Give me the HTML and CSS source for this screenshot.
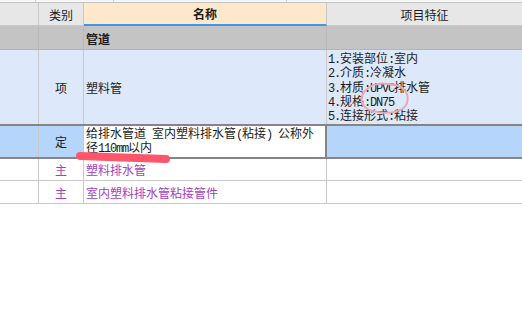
FILE: index.html
```html
<!DOCTYPE html>
<html lang="zh">
<head>
<meta charset="utf-8">
<link rel="stylesheet" href="styles.css">
</head>
<body>
<div class="sheet">
  <div class="top-strip"></div>
  <div class="row head">
    <div class="cell c1"></div>
    <div class="cell c2 center">类别</div>
    <div class="cell c3 center bold name-head">名称</div>
    <div class="cell c4 center">项目特征</div>
  </div>
  <div class="row group">
    <div class="cell c1"></div>
    <div class="cell c2"></div>
    <div class="cell c3 bold pad">管道</div>
    <div class="cell c4"></div>
  </div>
  <div class="row item">
    <div class="cell c1"></div>
    <div class="cell c2 center">项</div>
    <div class="cell c3 pad">塑料管</div>
    <div class="cell c4 features">
      <div class="line"><span class="lat">1.</span>安装部位<span class="lat">:</span>室内</div>
      <div class="line"><span class="lat">2.</span>介质<span class="lat">:</span>冷凝水</div>
      <div class="line"><span class="lat">3.</span>材质<span class="lat">:UPVC</span>排水管</div>
      <div class="line"><span class="lat">4.</span>规格<span class="lat">:DN75</span></div>
      <div class="line"><span class="lat">5.</span>连接形式<span class="lat">:</span>粘接</div>
    </div>
  </div>
  <div class="row sel">
    <div class="cell c1"></div>
    <div class="cell c2 center">定</div>
    <div class="cell c3 edit"><div class="eline">给排水管道<span class="lat"> </span>室内塑料排水管<span class="lat">(</span>粘接<span class="lat">) </span>公称外</div><div class="eline">径<span class="lat">110mm</span>以内</div></div>
    <div class="cell c4"></div>
  </div>
  <div class="row sub sub1">
    <div class="cell c1"></div>
    <div class="cell c2 center purple">主</div>
    <div class="cell c3 pad purple">塑料排水管</div>
    <div class="cell c4"></div>
  </div>
  <div class="row sub sub2">
    <div class="cell c1"></div>
    <div class="cell c2 center purple">主</div>
    <div class="cell c3 pad purple">室内塑料排水管粘接管件</div>
    <div class="cell c4"></div>
  </div>
</div>
<svg class="marks" width="522" height="319" viewBox="0 0 522 319">
  <path d="M388 84 C402 84 410 92 407 103 C404 112 388 115 372 111 C361 108 358 97 366 90 C372 84 382 82 393 85" fill="none" stroke="#f2a3b0" stroke-width="2" stroke-linecap="round"/>
  <path d="M80 156 L166 159" fill="none" stroke="#ff566b" stroke-width="8" stroke-linecap="round"/>
</svg>
</body>
</html>
```
FILE: styles.css
```css
html, body {
  margin: 0;
  padding: 0;
  background: #ffffff;
}
body {
  width: 522px;
  height: 319px;
  overflow: hidden;
  position: relative;
  font-family: "Noto Sans CJK SC", "DejaVu Sans", sans-serif;
  font-size: 12px;
  color: #1c1c1c;
}
.sheet {
  display: flex;
  flex-direction: column;
}
.lat {
  font-family: "Liberation Mono", monospace;
  font-size: 12px;
  letter-spacing: -1.2px;
  line-height: 0;
  white-space: pre;
}
.top-strip {
  height: 3px;
  box-sizing: border-box;
  border-bottom: 1px solid #c4c4c4;
  background:
    linear-gradient(#cfcfcf, #cfcfcf) 35px 0 / 1px 2px no-repeat,
    linear-gradient(#cfcfcf, #cfcfcf) 113px 0 / 1px 2px no-repeat,
    linear-gradient(#cfcfcf, #cfcfcf) 286px 0 / 1px 2px no-repeat,
    #f6f6f6;
}
.row {
  display: grid;
  grid-template-columns: 39px 45px 243px 1fr;
  box-sizing: border-box;
  border-bottom: 1px solid #c8c8c8;
}
.cell {
  box-sizing: border-box;
  border-right: 1px solid #c8c8c8;
  overflow: hidden;
  white-space: nowrap;
}
.c4 { border-right: none; }
.center {
  display: flex;
  align-items: center;
  justify-content: center;
}
.bold { font-weight: bold; }
.pad {
  padding-left: 2px;
  display: flex;
  align-items: center;
}
.head {
  height: 23px;
  background: #e7e7e7;
  border-bottom: none;
}
.head .cell { border-bottom: 1px solid #c8c8c8; }
.head .name-head {
  background: #fde8c9;
  border-bottom: 2px solid #3d97ef;
}
.group {
  height: 24px;
  background: #c4c4c4;
  border-bottom-color: #b4b4b4;
}
.group .cell { border-right-color: #b8b8b8; }
.group .c3 { padding-top: 1px; }
.item {
  height: 76px;
  background: #dde9fb;
  border-bottom: 2px solid #858585;
}
.features {
  padding: 1px 0 0 1px;
}
.line {
  height: 14.3px;
  line-height: 14.3px;
}
.sel {
  height: 33px;
  background: #b5d5fb;
  border-bottom: 2px solid #858585;
}
.sel .edit {
  background: #ffffff;
  border-right: 2px solid #858585;
  padding: 0 0 0 2px;
}
.eline {
  height: 14px;
  line-height: 14px;
}
.sub { background: #ffffff; }
.sub1 { height: 22px; }
.sub2 { height: 23px; }
.purple { color: #a33fc2; }
.marks {
  position: absolute;
  left: 0;
  top: 0;
  pointer-events: none;
}
```
